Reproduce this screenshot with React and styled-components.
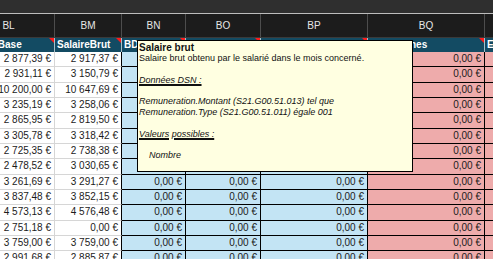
import React from 'react';
import styled, { createGlobalStyle } from 'styled-components';

const GlobalStyle = createGlobalStyle`
  body {
    margin: 0;
    background: #ffffff;
    font-family: "Liberation Sans", Arial, sans-serif;
  }
`;

const COLS = '92px 67px 64px 75px 107px 117px 100px';

const letters = ['BL', 'BM', 'BN', 'BO', 'BP', 'BQ', 'BR'];
const headers = ['SalaireBase', 'SalaireBrut', 'BDSalaireBrut', 'BDBrutAbattu', 'BDPrimesExceptionnelles', 'BDEtrennes', 'EffectifMoyen'];
const tones = ['white', 'white', 'blue', 'blue', 'blue', 'pink', 'pink'];

const base = ['2 877,39 €', '2 931,11 €', '10 200,00 €', '3 235,19 €', '2 865,95 €', '3 305,78 €', '2 725,35 €', '2 478,52 €', '3 261,69 €', '3 837,48 €', '4 573,13 €', '2 751,18 €', '3 759,00 €', '2 991,68 €'];
const brut = ['2 917,37 €', '3 150,79 €', '10 647,69 €', '3 258,06 €', '2 819,50 €', '3 318,42 €', '2 738,38 €', '3 030,65 €', '3 291,27 €', '3 852,15 €', '4 576,48 €', '0,00 €', '3 759,00 €', '2 885,87 €'];

const rows = base.map((b, i) => [b, brut[i], '0,00 €', '0,00 €', '0,00 €', '0,00 €', '']);

const toneBg = { white: '#ffffff', blue: '#c3e4f4', pink: '#eeabab' };

export default function App() {
  return (
    <>
      <GlobalStyle />
      <Screen>
        <TopBar />
        <Sheet>
          <LetterRow>
            {letters.map(l => <Letter key={l}>{l}</Letter>)}
          </LetterRow>
          <HeadRow>
            {headers.map(h => <HeadCell key={h}>{h}</HeadCell>)}
          </HeadRow>
          {rows.map((r, i) => (
            <DataRow key={i}>
              {r.map((v, j) => (
                <Cell key={j} $tone={tones[j]} $edge={tones[j + 1] && tones[j + 1] !== 'white'}>{v}</Cell>
              ))}
            </DataRow>
          ))}
        </Sheet>
        <Tip>
          <TipTitle>Salaire brut</TipTitle>
          <TipLine>Salaire brut obtenu par le salarié dans le mois concerné.</TipLine>
          <TipLine>&nbsp;</TipLine>
          <TipLine $italic><Under>Données DSN :</Under></TipLine>
          <TipLine>&nbsp;</TipLine>
          <TipLine $italic>Remuneration.Montant (S21.G00.51.013) tel que</TipLine>
          <TipLine $italic>Remuneration.Type (S21.G00.51.011) égale 001</TipLine>
          <TipLine>&nbsp;</TipLine>
          <TipLine $italic><Under>Valeurs possibles :</Under></TipLine>
          <TipLine>&nbsp;</TipLine>
          <TipLine $italic $indent>Nombre</TipLine>
        </Tip>
      </Screen>
    </>
  );
}

const Screen = styled.div`
  position: relative;
  width: 493px;
  height: 259px;
  overflow: hidden;
  background: #ffffff;
`;

const TopBar = styled.div`
  height: 13px;
  background: #2f2f2f;
  border-bottom: 1px solid #bdbdbd;
`;

const Sheet = styled.div`
  margin-left: -37px;
`;

const LetterRow = styled.div`
  display: grid;
  grid-template-columns: ${COLS};
  height: 23px;
  background: #1c1c1c;
  border-bottom: 1px solid #3a3a3a;
`;

const Letter = styled.div`
  display: flex;
  align-items: center;
  justify-content: center;
  border-right: 1px solid #4d4d4d;
  color: #e6e6e6;
  font-size: 10px;
`;

const HeadRow = styled.div`
  display: grid;
  grid-template-columns: ${COLS};
  height: 14px;
  background: #134b63;
`;

const HeadCell = styled.div`
  position: relative;
  overflow: hidden;
  white-space: nowrap;
  padding-left: 2px;
  border-right: 1px solid #a9bfc8;
  color: #ffffff;
  font-size: 10px;
  font-weight: bold;
  line-height: 14px;

  &::after {
    content: '';
    position: absolute;
    top: 0;
    right: 0;
    border-top: 5px solid #ff1a1a;
    border-left: 5px solid transparent;
  }
`;

const DataRow = styled.div`
  display: grid;
  grid-template-columns: ${COLS};
  height: 15.33px;
`;

const Cell = styled.div`
  box-sizing: border-box;
  overflow: hidden;
  white-space: nowrap;
  text-align: right;
  padding-right: 3px;
  background: ${p => toneBg[p.$tone]};
  border-bottom: 1px solid ${p => (p.$tone === 'white' ? '#d6d6d6' : '#000000')};
  border-right: 1px solid ${p => (p.$tone === 'white' && !p.$edge ? '#d6d6d6' : '#000000')};
  color: #1b1b1b;
  font-size: 10px;
  line-height: 14.5px;
`;

const Tip = styled.div`
  position: absolute;
  left: 137px;
  top: 40px;
  width: 273px;
  height: 129px;
  padding: 1px 0 0 1px;
  background: #ffffe1;
  border: 1px solid #000000;
  color: #111111;
  font-size: 9px;
`;

const TipTitle = styled.div`
  font-weight: bold;
  font-size: 10px;
  line-height: 11px;
`;

const TipLine = styled.div`
  line-height: 10.8px;
  white-space: nowrap;
  font-style: ${p => (p.$italic ? 'italic' : 'normal')};
  padding-left: ${p => (p.$indent ? '10px' : '0')};
`;

const Under = styled.span`
  text-decoration: underline;
  text-decoration-thickness: 1.5px;
  text-underline-offset: 1px;
`;
